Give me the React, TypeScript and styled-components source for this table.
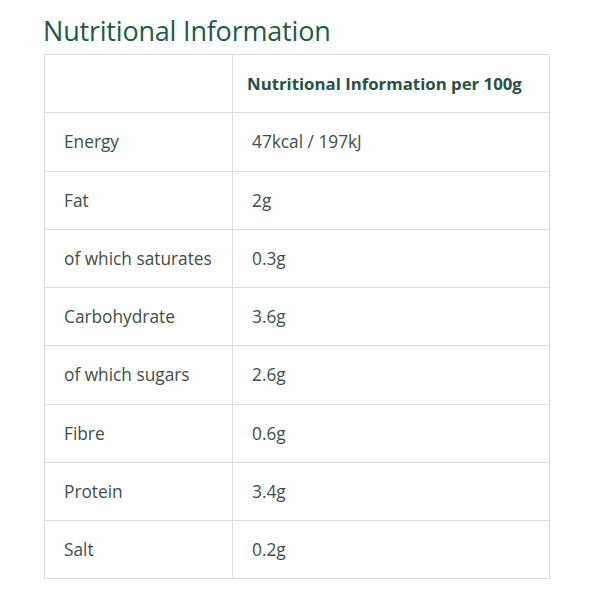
import styled, { createGlobalStyle } from 'styled-components';

const GlobalStyle = createGlobalStyle`
  body {
    margin: 0;
    background: #ffffff;
    font-family: "Open Sans", "Noto Sans", sans-serif;
  }
`;

const Page = styled.div`
  width: 599px;
  height: 599px;
  padding: 14px 0 0 44px;
  box-sizing: border-box;
`;

const Title = styled.h2`
  margin: 0 0 6px -1px;
  font-size: 27px;
  font-weight: 400;
  line-height: 34px;
  color: #1f5a45;
  letter-spacing: -0.2px;
`;

const Table = styled.table`
  width: 506px;
  border-collapse: collapse;
  border: 1px solid #dcdcdc;
`;

const Cell = styled.td<{ $first?: boolean }>`
  height: 57.25px;
  padding: 0 19px;
  border: 1px solid #dcdcdc;
  width: ${(p) => (p.$first ? '149px' : 'auto')};
  font-size: 17.3px;
  color: #3e4f47;
  vertical-align: middle;
`;

const HeadCell = styled(Cell).attrs({ as: 'th' })`
  padding-left: 14px;
  text-align: left;
  font-weight: 700;
  font-size: 16.8px;
  color: #27523f;
`;

const rows: [string, string][] = [
  ['Energy', '47kcal / 197kJ'],
  ['Fat', '2g'],
  ['of which saturates', '0.3g'],
  ['Carbohydrate', '3.6g'],
  ['of which sugars', '2.6g'],
  ['Fibre', '0.6g'],
  ['Protein', '3.4g'],
  ['Salt', '0.2g'],
];

export default function App() {
  return (
    <Page>
      <GlobalStyle />
      <Title>Nutritional Information</Title>
      <Table>
        <thead>
          <tr>
            <HeadCell $first></HeadCell>
            <HeadCell>Nutritional Information per 100g</HeadCell>
          </tr>
        </thead>
        <tbody>
          {rows.map(([name, value]) => (
            <tr key={name}>
              <Cell $first>{name}</Cell>
              <Cell>{value}</Cell>
            </tr>
          ))}
        </tbody>
      </Table>
    </Page>
  );
}
